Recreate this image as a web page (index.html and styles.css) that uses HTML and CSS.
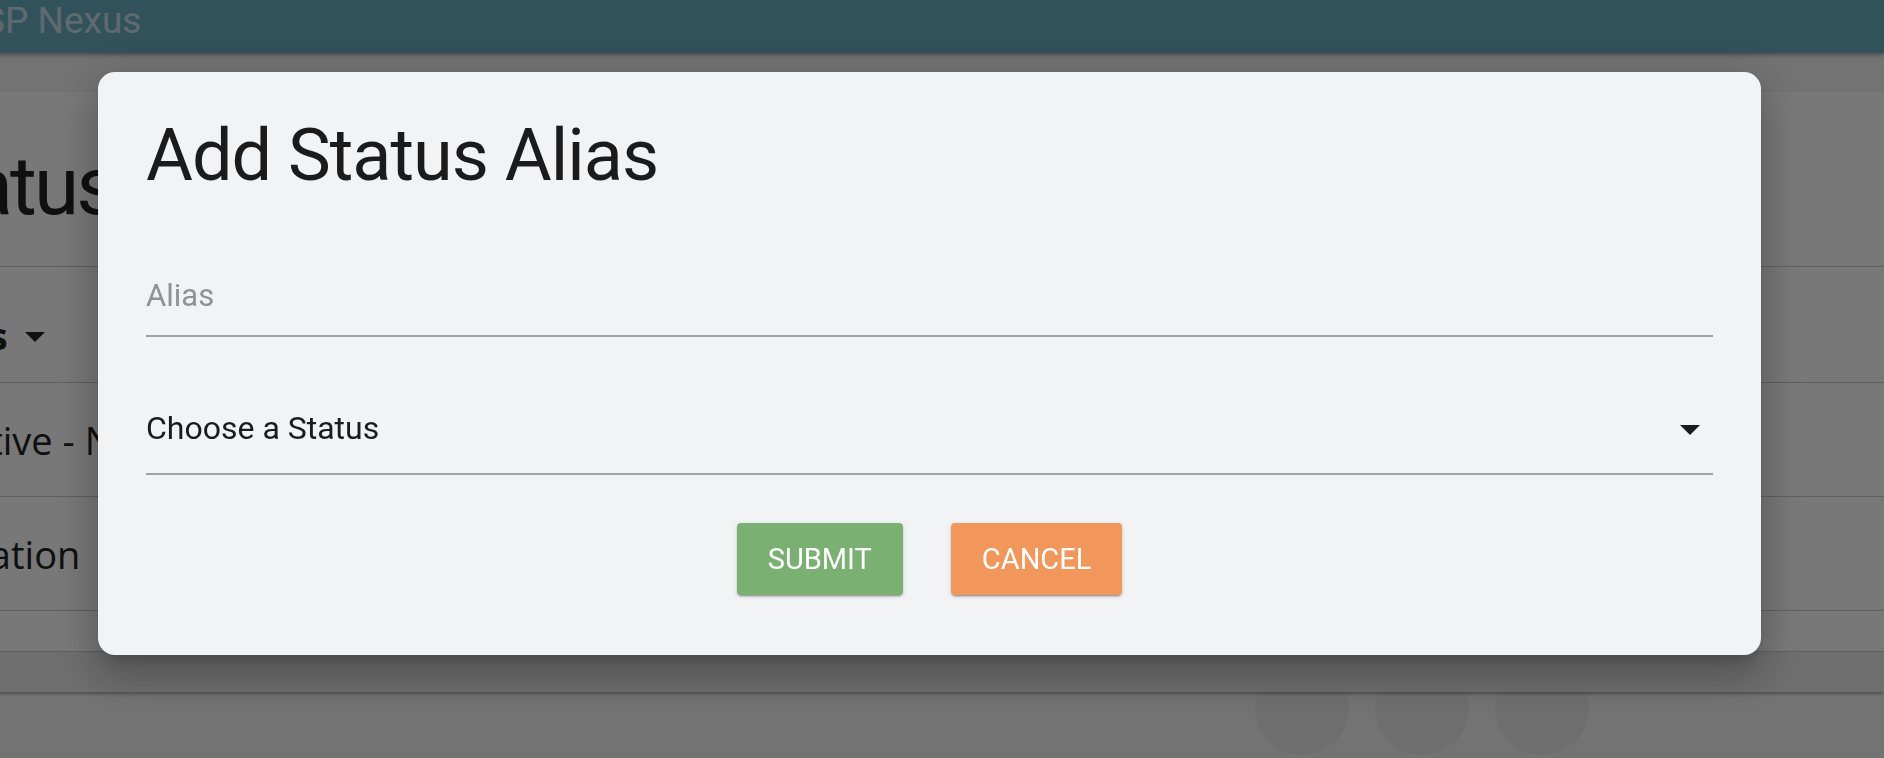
FILE: index.html
```html
<!DOCTYPE html>
<html lang="en">
<head>
<meta charset="utf-8">
<title>ISP Nexus - Add Status Alias</title>
<link rel="stylesheet" href="styles.css">
</head>
<body>
<div class="page">
  <header class="topbar"><span class="brand">ISP Nexus</span></header>
  <div class="toolbar"></div>
  <main class="card">
    <div class="card-title"><h1 class="page-title">Status Aliases</h1></div>
    <div class="row row-head"><span class="head-cell">Status</span><span class="sort-caret"></span></div>
    <div class="row"><span class="cell">Active - New</span></div>
    <div class="row row-long"><span class="cell">Installation</span></div>
    <div class="row row-short"></div>
    <div class="card-foot"></div>
  </main>
  <div class="pager"><span class="pg"></span><span class="pg"></span><span class="pg"></span></div>
</div>

<div class="overlay">
  <div class="dialog" role="dialog">
    <h2 class="dialog-title">Add Status Alias</h2>
    <div class="field">
      <span class="placeholder">Alias</span>
    </div>
    <div class="field field-select">
      <span class="select-value">Choose a Status</span>
      <span class="select-arrow"></span>
    </div>
    <div class="actions">
      <button class="btn btn-submit">Submit</button>
      <button class="btn btn-cancel">Cancel</button>
    </div>
  </div>
</div>
</body>
</html>
```

FILE: styles.css
```css
html, body {
  margin: 0;
  padding: 0;
  width: 1884px;
  height: 758px;
  overflow: hidden;
}

body {
  background: #e6e6e6;
  font-family: "Open Sans", "Noto Sans", sans-serif;
}

/* ---------- underlying page (scrolled to the right) ---------- */
.page {
  width: 2004px;
  margin-left: -120px;
}

.topbar {
  height: 53px;
  background: #64a4b6;
  box-shadow: 0 2px 4px rgba(0, 0, 0, 0.35);
  position: relative;
  z-index: 2;
  padding-left: 93px;
}

.brand {
  display: block;
  font-family: Roboto, "Noto Sans", sans-serif;
  font-size: 37px;
  line-height: 42px;
  color: #bcd4dc;
}

.toolbar {
  height: 39px;
}

.card {
  position: relative;
  z-index: 1;
  display: block;
  background: #f0f0f0;
  box-shadow: 0 2px 3px rgba(0, 0, 0, 0.3);
}

.card-title {
  padding: 53px 0 39px 19px;
  border-bottom: 1px solid #bfbfbf;
}

.page-title {
  margin: 0;
  font-family: Roboto, "Noto Sans", sans-serif;
  font-weight: 400;
  font-size: 82px;
  line-height: 82px;
  letter-spacing: -3px;
  color: #202020;
}

.row {
  display: flex;
  align-items: center;
  padding: 31px 0 30px 67px;
  border-bottom: 1px solid #bfbfbf;
  font-size: 38px;
  line-height: 52px;
  color: #202020;
}

.row-long {
  padding-left: 4px;
}

.row-head {
  align-items: center;
  padding: 42px 0 21px 7px;
}

.head-cell {
  font-weight: 700;
}

.sort-caret {
  width: 0;
  height: 0;
  margin-left: 17px;
  margin-top: 4px;
  border-left: 10px solid transparent;
  border-right: 10px solid transparent;
  border-top: 10px solid #202020;
}

.row-short {
  padding: 0;
  height: 40px;
}

.card-foot {
  height: 40px;
  background: #dcdcdc;
}

.pager {
  display: flex;
  justify-content: flex-end;
  gap: 26px;
  padding-right: 295px;
  margin-top: -31px;
}

.pg {
  width: 94px;
  height: 94px;
  border-radius: 50%;
  background: rgba(0, 0, 0, 0.035);
}

/* ---------- modal ---------- */
.overlay {
  position: fixed;
  inset: 0;
  z-index: 10;
  background: rgba(0, 0, 0, 0.5);
  display: flex;
  align-items: flex-start;
  padding: 72px 0 0 98px;
}

.dialog {
  width: 1663px;
  box-sizing: border-box;
  padding: 48px 48px 60px;
  background: #f2f3f5;
  border-radius: 17px;
  box-shadow: 0 11px 15px -7px rgba(0, 0, 0, 0.2),
              0 24px 38px 3px rgba(0, 0, 0, 0.14),
              0 9px 46px 8px rgba(0, 0, 0, 0.12);
  font-family: Roboto, "Noto Sans", sans-serif;
  color: #1b1b1b;
}

.dialog-title {
  margin: 0;
  font-weight: 400;
  font-size: 72px;
  line-height: 72px;
  letter-spacing: -1px;
  color: #1b1b1b;
}

.field {
  display: flex;
  align-items: flex-start;
  margin-top: 86px;
  padding-bottom: 21px;
  border-bottom: 2px solid #a0a1a3;
}

.placeholder {
  font-size: 31px;
  line-height: 36px;
  color: #8f9194;
}

.field-select {
  margin-top: 72px;
  padding-bottom: 26px;
  justify-content: space-between;
  align-items: center;
}

.select-value {
  font-size: 32px;
  line-height: 38px;
  color: #1b1b1b;
}

.select-arrow {
  width: 0;
  height: 0;
  margin-right: 13px;
  margin-top: 4px;
  border-left: 10px solid transparent;
  border-right: 10px solid transparent;
  border-top: 10px solid #1b1b1b;
}

.actions {
  display: flex;
  justify-content: center;
  gap: 48px;
  margin-top: 48px;
}

.btn {
  height: 72px;
  padding: 0 31px;
  border: none;
  border-radius: 4px;
  font-family: Roboto, "Noto Sans", sans-serif;
  font-size: 29px;
  font-weight: 400;
  text-transform: uppercase;
  color: #ffffff;
  cursor: pointer;
  box-shadow: 0 3px 1px -2px rgba(0, 0, 0, 0.2),
              0 2px 2px 0 rgba(0, 0, 0, 0.14),
              0 1px 5px 0 rgba(0, 0, 0, 0.12);
}

.btn-submit {
  background: #7bb073;
}

.btn-cancel {
  background: #f1975b;
}
```
